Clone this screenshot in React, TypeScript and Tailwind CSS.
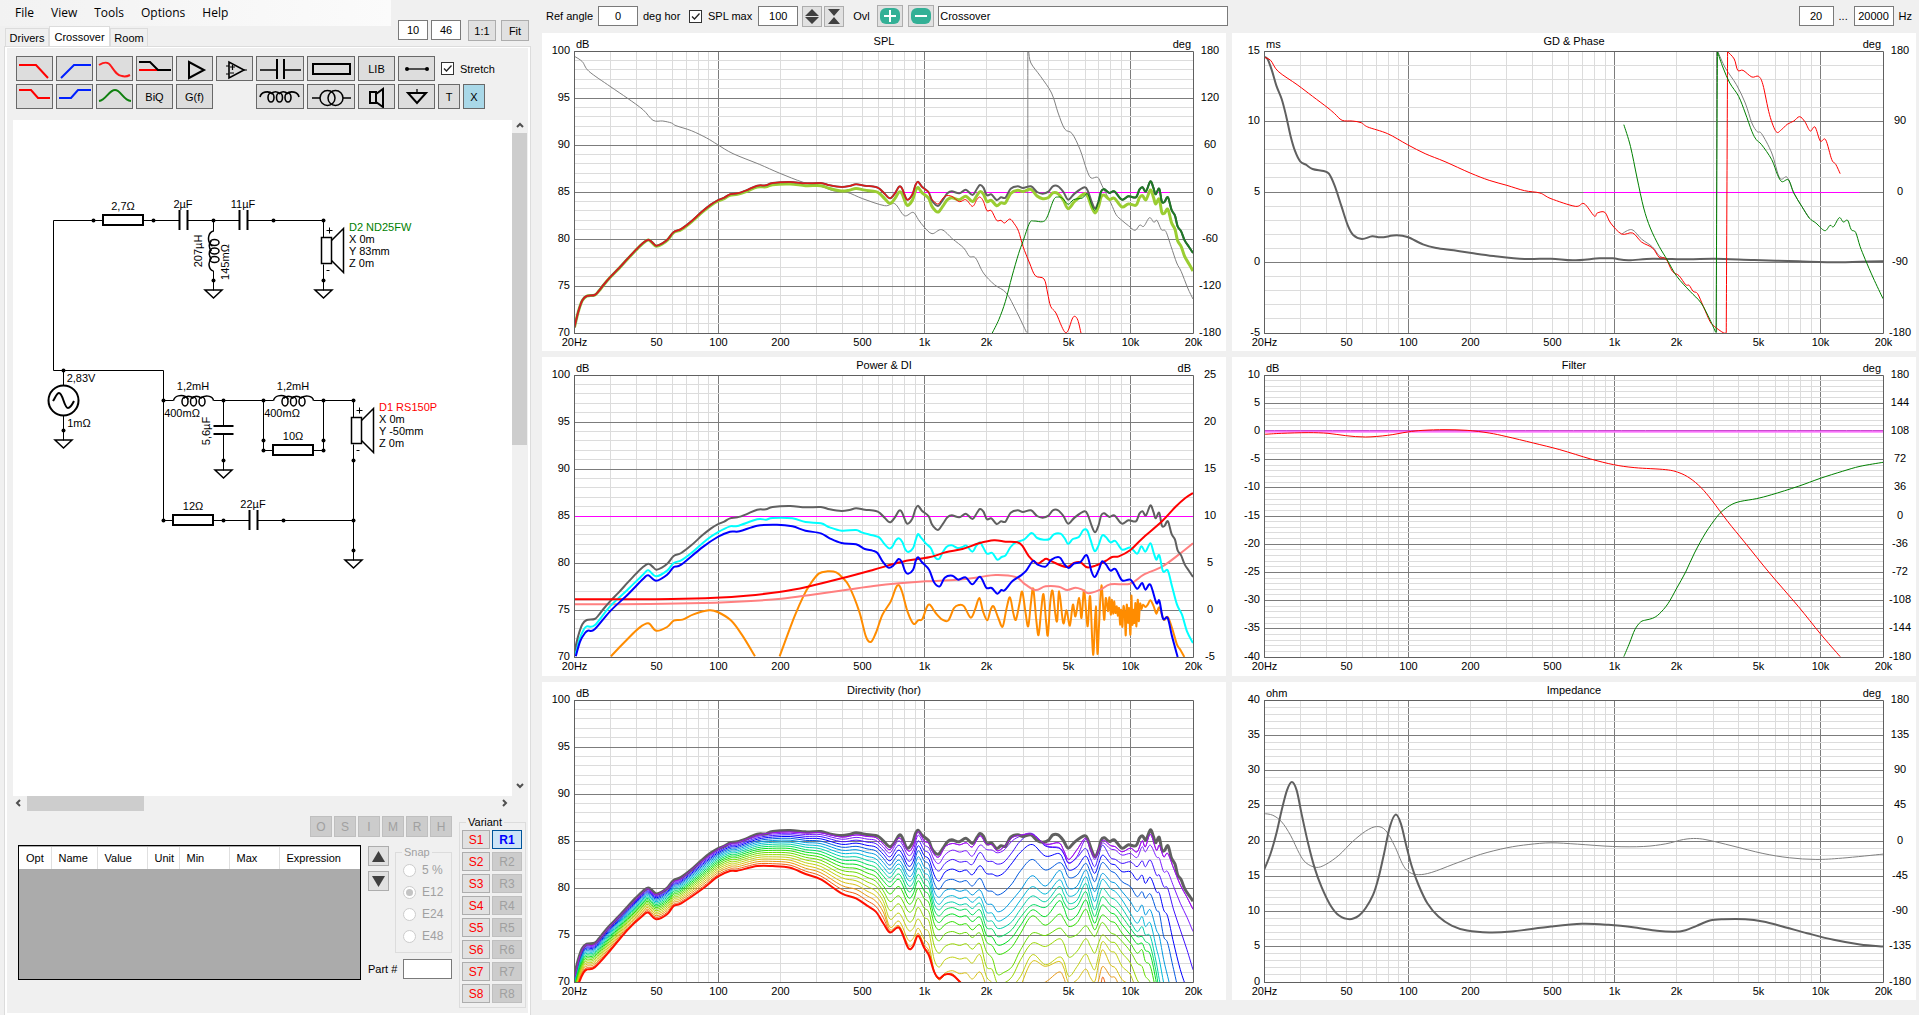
// src/App.tsx
import React, { useLayoutEffect, useRef, useState } from "react";

type Point = [number, number];

interface Trace {
  d: string;
  color: string;
  width?: number;
  dy?: number;
}

interface TargetLine {
  row: number;
  from: number;
  to: number;
}

interface ChartProps {
  title: string;
  leftUnit: string;
  rightUnit?: string;
  leftLabels: string[];
  rightLabels?: string[];
  rows: number;
  rowsPerMajor?: number;
  view: string;
  traces: Trace[];
  target?: TargetLine;
}

/* ---------- curve helpers ---------- */

const parse = (data: string): Point[] =>
  data
    .trim()
    .split(/\s+/)
    .map((p) => p.split(",").map(Number) as Point);

// the busy upper octaves are stored on a finer grid
const fine = (data: string, dy: number) =>
  parse(data)
    .map(([x, y]) => `${659 + x * 0.7575},${y + dy}`)
    .join(" ");

const smoothPoints = (pts: Point[]) => {
  let d = `M${pts[0][0]} ${pts[0][1]}`;
  for (let i = 0; i < pts.length - 1; i++) {
    const p0 = pts[i - 1] || pts[i];
    const p1 = pts[i];
    const p2 = pts[i + 1];
    const p3 = pts[i + 2] || p2;
    d += `C${p1[0] + (p2[0] - p0[0]) / 6} ${p1[1] + (p2[1] - p0[1]) / 6} ${
      p2[0] - (p3[0] - p1[0]) / 6
    } ${p2[1] - (p3[1] - p1[1]) / 6} ${p2[0]} ${p2[1]}`;
  }
  return d;
};

// "|" starts a new segment
const smooth = (data: string) =>
  data
    .split("|")
    .map((part) => smoothPoints(parse(part)))
    .join("");

const interpolate = (table: Point[], x: number) => {
  for (let i = 1; i < table.length; i++) {
    if (x <= table[i][0]) {
      const [x0, y0] = table[i - 1];
      const [x1, y1] = table[i];
      return y0 + ((x - x0) / (x1 - x0)) * (y1 - y0);
    }
  }
  return table[table.length - 1][1];
};

/* ---------- curve data ---------- */

const MAIN_LOW =
  "79,893 88,845 97,812 107,799 125,796 135,783 145,766 160,743 180,716 200,687 220,659 235,640 247,630 256,638 265,648 278,642 292,628 305,607 322,598 345,575 370,545 390,524 405,512 420,504 433,494 450,491 470,482 495,468 515,467 530,460 570,457 605,461 640,460 660,467 687,472 705,469 720,464 740,468 765,472 775,479 785,492 797,506 808,492 818,471 825,477 836,510 848,495 855,467 861,456 870,471 885,487";
const MAIN_MID =
  "892,510 900,524 908,528 918,510 928,491 938,485 955,491 970,480 985,496 995,478 1002,466 1010,474 1018,497 1028,494 1040,511 1050,503 1060,504 1072,477 1088,470 1100,475 1118,470 1132,487 1145,492 1158,486 1168,470 1180,470 1192,487 1203,510 1218,491 1240,473 1248,485 1256,515 1264,536";
const MAIN_HIGH =
  "1272,515 1278,485 1285,479 1297,490 1308,485 1325,510 1340,500 1357,503 1365,480 1372,473 1380,485 1390,455 1397,475 1402,494 1410,477 1416,515 1422,517 1430,503 1438,540 1446,558 1452,590 1460,605 1468,632 1478,652 1487,670";
const MAIN = `${MAIN_LOW} ${MAIN_MID} ${MAIN_HIGH}`;

const LISTENING_OFFSET = parse(
  "78,0 450,3 570,6 640,8 687,12 765,14 870,18 1000,20 1060,16 1088,12 1118,9 1145,15 1203,27 1264,14 1300,20 1390,26 1430,36 1487,54"
);
const LISTENING = parse(MAIN)
  .map(([x, y]) => `${x},${y + interpolate(LISTENING_OFFSET, x)}`)
  .join(" ");

const SPL_TRACES: Trace[] = [
  {
    color: "#808080",
    d: "79,80 97,96 112,125 160,170 200,206 235,240 258,272 280,274 300,280 310,288 345,303 380,325 405,345 440,372 500,404 545,430 600,458 640,470 670,484 700,488 735,507 785,528 808,522 830,558 850,548 862,570 875,592 893,612 915,600 940,628 965,655 978,680 992,685 1010,730 1035,765 1062,790 1085,845 1108,908 | 1111,910 1111,66 | 1113,66 1118,100 1140,140 1165,190 1180,250 1195,298 1212,312 1230,360 1245,420 1255,445 1270,443 1280,468 1300,520 1312,555 1325,572 1340,588 1355,602 1366,586 1375,590 1388,564 1398,578 1405,572 1415,600 1425,605 1437,650 1450,700 1460,725 1475,775 1487,808",
  },
  { color: "#9acd32", width: 3, d: LISTENING },
  { color: "#606060", width: 2, d: MAIN },
  { color: "#e01818", width: 1.5, d: MAIN_LOW },
  {
    color: "#ff0000",
    d: "885,487 892,508 900,518 908,522 922,500 938,500 955,516 970,510 985,530 995,510 1002,502 1010,515 1018,543 1028,543 1040,572 1050,572 1058,580 1070,568 1080,582 1090,605 1100,650 1115,700 1128,738 1148,748 1156,790 1163,830 1175,850 1188,890 1196,908 1203,902 1212,868 1218,860 1225,872 1232,910",
  },
  {
    color: "#008000",
    d: `1030,910 1045,870 1060,815 1075,740 1090,672 1100,635 1115,580 1125,574 1145,576 1155,562 1170,510 1180,502 1190,506 1203,524 1215,510 1235,505 1245,492 1250,500 1256,525 1264,542 ${MAIN_HIGH}`,
  },
  { color: "#207828", width: 2, d: MAIN_HIGH },
];

const GD_TRACES: Trace[] = [
  {
    color: "#606060",
    width: 2,
    d: "90,171 98,178 108,213 118,258 130,298 140,348 150,408 160,453 172,485 185,495 200,508 225,514 237,522 250,558 265,618 280,678 292,706 312,718 335,710 355,713 390,707 415,712 450,734 480,745 520,752 560,760 610,769 680,778 740,777 790,782 850,776 880,776 915,782 970,777 1050,779 1110,777 1200,781 1300,785 1390,788 1440,786 1492,785",
  },
  {
    color: "#808080",
    d: "900,703 923,690 945,718 970,742 985,768 1000,777 | 1115,999 1115,156 | 1118,156 1135,205 1160,255 1180,310 1195,370 1207,396 1217,402 1240,460 1258,535 1275,533 1290,580 1308,620 1325,655",
  },
  {
    color: "#ff0000",
    d: "90,173 105,182 122,215 165,255 200,290 235,325 250,342 267,362 290,364 310,369 325,382 370,402 415,435 455,462 500,486 557,520 600,542 640,557 680,573 715,580 740,597 795,620 815,612 838,649 845,640 862,638 875,670 900,703 925,700 945,727 970,745 985,773 1000,777 1015,815 1030,828 1045,855 1053,857 1062,875 1072,882 1085,920 1100,965 1110,980 1130,999 1137,999 | 1137,999 1140,156 | 1140,156 1155,178 1163,212 1175,212 1195,232 1210,230 1220,255 1235,345 1250,396 1262,390 1275,374 1290,364 1303,351 1315,366 1327,394 1338,382 1350,424 1362,420 1376,480 1385,494 1395,522",
  },
  {
    color: "#008000",
    d: "905,375 920,440 935,535 950,625 965,685 985,740 1003,780 1025,830 1055,875 1080,910 1100,960 1113,998 | 1114,998 1117,156 | 1117,156 1130,205 1145,250 1165,290 1180,340 1195,395 1205,420 1217,435 1240,480 1253,525 1263,546 1278,541 1290,580 1308,620 1325,655 1340,670 1360,693 1372,677 1380,681 1393,654 1402,667 1412,662 1420,690 1430,698 1440,740 1452,780 1470,835 1492,897",
  },
];

const POWER_TRACES: Trace[] = [
  {
    color: "#ff8c00",
    width: 2,
    d:
      "162,920 180,895 200,868 225,836 247,821 265,843 290,832 305,813 325,810 350,794 385,782 405,787 435,812 460,855 490,920 | 546,920 560,870 580,800 600,740 615,705 635,672 655,665 675,668 690,685 " +
      fine(
        "60,290 90,365 110,440 125,457 140,430 160,375 185,335 200,295 210,287 220,310 235,365 253,402 267,392 280,388 292,355 302,345 320,370 340,390 358,392 375,355 390,346 405,350 425,384 438,360 451,325 462,365 475,392 485,360 494,350 508,385 521,411 532,360 543,323 553,370 561,390 572,340 580,306 590,370 598,410 606,340 613,297 622,390 629,436 637,360 644,314 652,400 657,436 664,340 671,303 679,370 685,393 691,305 703,400 713,362 723,408 732,345 740,380 751,325 758,385 766,302 776,410 784,320 793,495 801,350 806,492 811,400 818,287 826,390 831,325 838,365 842,323 846,375 849,330 853,372 856,335 860,370 864,350 867,378 871,355 874,405 877,360 881,412 884,350 888,375 891,437 894,345 898,400 901,355 905,435 908,318 911,405 914,360 917,400 920,340 923,410 927,330 930,395 934,342 938,358 943,345 950,352 957,345 965,332 975,350 983,372 992,353 1005,390 1017,382 1030,415 1045,465 1055,480 1067,502",
        420
      ),
  },
  {
    color: "#ff8080",
    width: 2,
    d:
      "79,764 250,763 400,759 470,755 550,747 620,735 700,720 760,709 " +
      fine(
        "210,281 290,275 360,272 440,264 500,256 560,262 590,285 620,301 650,290 690,291 715,301 740,294 760,300 780,311 815,300 845,284 905,282 945,255 1000,231 1050,195 1093,161",
        420
      ),
  },
  {
    color: "#00ffff",
    width: 2,
    d:
      "79,915 90,870 100,840 107,830 125,827 160,770 200,720 235,675 247,662 265,680 290,663 305,640 322,632 345,610 380,570 405,548 433,530 450,529 495,509 515,510 530,505 575,506 605,517 640,521 660,533 687,543 720,541 " +
      fine(
        "97,128 130,137 150,143 165,162 180,176 190,170 200,152 210,146 220,158 228,178 237,187 252,175 260,150 267,133 275,143 290,161 305,175 318,203 330,208 340,190 352,172 368,167 385,175 400,172 412,168 430,186 442,168 453,158 462,172 474,192 490,190 505,210 518,202 530,197 545,172 560,158 585,150 608,130 625,145 645,150 662,148 675,134 695,132 708,147 718,163 732,148 750,142 763,122 775,122 785,150 797,184 808,170 820,138 832,143 845,158 860,154 880,180 905,174 925,192 938,170 950,186 965,161 975,190 983,210 992,197 1003,245 1017,242 1030,290 1045,345 1060,375 1075,425 1093,460",
        420
      ),
  },
  { color: "#606060", width: 2, d: MAIN, dy: 12 },
  {
    color: "#ff0000",
    width: 2,
    d:
      "79,749 200,749 300,748 400,744 470,738 545,727 610,711 687,686 760,660 " +
      fine(
        "190,224 240,212 300,203 350,188 400,178 450,161 495,152 530,156 565,158 580,168 600,200 625,221 640,214 652,207 670,216 712,232 735,220 755,218 775,233 800,228 830,214 850,202 870,200 905,181 940,147 1000,95 1040,52 1070,25 1093,10",
        420
      ),
  },
  {
    color: "#0000ff",
    width: 2,
    d:
      "82,920 92,875 103,850 110,843 125,839 160,785 200,735 235,688 247,677 265,693 290,675 305,652 322,645 370,593 405,562 433,546 455,545 495,528 540,525 575,530 605,543 640,551 660,566 687,580 720,584 740,598 " +
      fine(
        "130,183 145,190 160,215 178,234 192,228 208,208 218,217 228,245 237,252 252,240 260,213 267,203 278,217 300,240 315,278 332,290 347,264 370,258 388,270 410,263 430,284 453,261 472,294 488,295 505,312 517,301 527,302 550,275 575,258 592,243 612,214 625,224 650,231 668,210 692,203 705,222 720,235 735,222 755,217 770,197 778,205 788,245 798,262 810,240 820,215 832,225 845,243 860,238 880,272 905,270 925,297 940,280 950,300 965,285 983,340 992,333 1003,387 1017,385 1030,440 1047,502",
        420
      ),
  },
];

const FILTER_TRACES: Trace[] = [
  { color: "#ff80ff", width: 2, d: "90,246 1492,246" },
  { color: "#c030c8", d: "90,243 1492,243" },
  {
    color: "#ff0000",
    d: "90,254 130,251 190,249 235,251 275,258 320,262 370,257 415,247 450,242 500,240 550,242 600,250 640,261 700,280 760,300 830,328 882,345 930,354 1000,360 1030,369 1055,386 1080,414 1105,453 1140,515 1180,580 1235,670 1300,770 1350,852 1395,921",
  },
  {
    color: "#008000",
    d: "905,921 918,880 930,840 943,817 955,811 970,806 985,793 1005,762 1025,715 1045,667 1065,610 1090,550 1115,503 1130,482 1150,464 1170,455 1205,447 1240,435 1300,410 1350,386 1400,365 1440,350 1492,338",
  },
];

const IMPEDANCE_TRACES: Trace[] = [
  {
    color: "#808080",
    d: "90,415 110,420 130,440 150,480 170,535 185,563 208,577 230,568 260,540 290,500 320,468 345,454 365,465 385,510 405,570 420,592 440,599 470,592 520,567 580,538 640,518 690,508 740,503 800,507 880,514 950,514 1000,506 1040,493 1070,490 1100,496 1150,512 1220,535 1280,548 1340,553 1400,549 1492,537",
  },
  {
    color: "#606060",
    width: 2,
    d: "90,585 105,535 118,475 130,405 142,345 153,320 164,345 175,415 190,505 205,580 220,635 240,690 260,722 284,733 305,722 320,700 337,660 350,605 362,535 375,455 388,418 400,445 412,510 425,575 440,630 460,685 485,725 515,752 550,767 600,773 650,770 740,755 810,747 870,750 930,758 980,768 1020,771 1045,766 1070,753 1100,737 1130,733 1180,733 1220,740 1270,757 1320,775 1380,795 1440,809 1492,815",
  },
];

// one colour per 10 degrees off axis
const ANGLE_COLORS = [
  "#606060", "#a010f0", "#7a18ff", "#4010ff", "#0000ff", "#0058e0", "#0098e0",
  "#00b8d8", "#00d0a8", "#00dc60", "#00e020", "#30e000", "#68dc00", "#98d800",
  "#c0d010", "#d8c010", "#e89810", "#f06010", "#ff1000",
];

// below 700 Hz the fan is spread between its top and bottom curve
const FAN: [number, number, number][] = [
  [80, 905, 965], [90, 848, 922], [100, 815, 893], [108, 808, 884],
  [125, 806, 878], [160, 752, 828], [200, 697, 765], [235, 650, 722],
  [247, 640, 713], [265, 657, 733], [290, 638, 718], [305, 617, 693],
  [322, 608, 685], [370, 555, 642], [405, 521, 605], [433, 503, 588],
  [450, 500, 587], [495, 478, 573], [530, 470, 573], [570, 467, 578],
  [605, 470, 597], [640, 469, 613], [687, 481, 655], [720, 474, 670],
  [745, 478, 692], [765, 481, 710], [782, 500, 745],
];

// above it: x on the fine grid, then the level of every angle
const OFF_AXIS: number[][] = [
  [183, 80, 88, 98, 110, 122, 135, 147, 160, 172, 186, 200, 222, 245, 272, 298, 322, 330, 336, 338],
  [210, 47, 53, 62, 75, 90, 104, 120, 132, 145, 162, 178, 200, 228, 252, 280, 304, 318, 322, 324],
  [237, 88, 92, 105, 122, 137, 150, 167, 180, 196, 213, 232, 250, 274, 303, 330, 360, 375, 382, 384],
  [252, 72, 78, 92, 108, 124, 140, 158, 172, 188, 204, 222, 242, 268, 298, 326, 356, 372, 378, 380],
  [267, 28, 34, 45, 62, 77, 92, 110, 128, 144, 163, 182, 205, 235, 262, 297, 325, 340, 345, 348],
  [285, 56, 62, 74, 90, 106, 122, 140, 158, 174, 192, 212, 235, 264, 292, 326, 358, 374, 380, 384],
  [300, 65, 70, 84, 100, 118, 134, 152, 170, 188, 207, 227, 250, 278, 305, 340, 378, 395, 403, 408],
  [315, 97, 102, 118, 138, 164, 188, 212, 232, 250, 268, 288, 310, 342, 376, 418, 452, 454, 456, 456],
  [330, 103, 110, 130, 153, 183, 208, 232, 253, 270, 288, 308, 330, 363, 400, 442, 478, 480, 480, 476],
  [348, 72, 80, 104, 130, 156, 184, 212, 234, 252, 270, 290, 314, 342, 380, 420, 460, 466, 466, 464],
  [370, 63, 70, 90, 118, 147, 178, 207, 227, 246, 263, 282, 305, 335, 372, 412, 453, 462, 466, 466],
  [392, 66, 74, 96, 126, 155, 186, 214, 236, 255, 271, 291, 315, 342, 377, 418, 462, 484, 488, 486],
  [412, 58, 68, 92, 124, 150, 182, 210, 232, 252, 268, 288, 312, 338, 372, 415, 460, 500, 510, 512],
  [430, 72, 80, 108, 133, 164, 198, 225, 247, 266, 285, 305, 330, 353, 388, 430, 478, 520],
  [453, 42, 47, 75, 97, 137, 175, 210, 232, 250, 270, 292, 315, 340, 372, 405, 457, 510],
  [472, 70, 72, 88, 122, 160, 210, 250, 276, 300, 322, 345, 365, 395, 440, 470, 500],
  [490, 72, 74, 90, 124, 162, 214, 254, 280, 304, 328, 352, 378, 416, 450, 490],
  [505, 88, 92, 98, 132, 168, 225, 275, 303, 325, 350, 375, 402, 463, 490, 520],
  [525, 78, 80, 90, 126, 158, 216, 268, 297, 322, 346, 372, 400, 458, 490, 520],
  [550, 50, 52, 62, 96, 128, 190, 240, 275, 304, 328, 352, 380, 440, 470, 500],
  [575, 43, 45, 48, 62, 96, 152, 210, 240, 268, 292, 316, 340, 390, 420, 470, 500],
  [610, 45, 43, 40, 42, 73, 118, 167, 200, 228, 255, 270, 288, 340, 370, 405, 425, 500],
  [650, 72, 72, 76, 78, 108, 150, 198, 222, 245, 262, 290, 316, 347, 380, 435, 440, 487, 520],
  [690, 43, 68, 82, 84, 100, 128, 152, 180, 200, 222, 243, 283, 325, 357, 412, 425, 457, 500],
  [705, 60, 92, 100, 102, 122, 140, 174, 200, 222, 246, 264, 298, 336, 372, 425, 445, 475],
  [720, 88, 118, 130, 128, 150, 172, 205, 228, 250, 268, 300, 320, 352, 412, 470, 490, 520],
  [745, 62, 88, 108, 112, 140, 165, 198, 218, 240, 258, 285, 308, 344, 394, 440, 480, 520],
  [770, 50, 54, 58, 85, 108, 130, 150, 170, 190, 215, 240, 268, 318, 357, 403, 448, 500],
  [785, 84, 86, 92, 116, 136, 158, 185, 210, 235, 258, 280, 302, 336, 380, 430, 474, 520],
  [798, 110, 112, 118, 140, 160, 185, 215, 245, 270, 290, 310, 330, 350, 400, 450, 485, 520],
  [810, 82, 86, 92, 106, 130, 152, 184, 206, 232, 256, 278, 304, 326, 368, 404, 430, 480],
  [822, 53, 60, 68, 75, 105, 127, 160, 178, 205, 230, 255, 285, 308, 345, 365, 390, 440, 472],
  [845, 66, 76, 86, 112, 130, 152, 184, 206, 232, 256, 278, 304, 338, 366, 394, 435, 470],
  [860, 65, 80, 90, 118, 135, 160, 190, 215, 240, 265, 285, 310, 345, 370, 400, 445, 475],
  [880, 85, 95, 105, 130, 155, 185, 215, 240, 265, 290, 315, 340, 365, 400, 440, 480, 520],
  [905, 75, 84, 100, 125, 155, 200, 245, 280, 305, 325, 345, 370, 395, 430, 465, 500],
  [925, 80, 95, 112, 140, 180, 230, 275, 310, 335, 350, 372, 400, 430, 480, 520],
  [940, 47, 62, 80, 122, 165, 215, 255, 290, 320, 350, 370, 390, 440, 500],
  [950, 58, 80, 95, 140, 190, 235, 285, 320, 345, 365, 392, 425, 470, 520],
  [965, 30, 42, 75, 120, 172, 222, 270, 310, 350, 380, 405, 440, 490],
  [983, 70, 90, 110, 165, 215, 270, 330, 385, 430, 460, 490, 520],
  [992, 52, 75, 115, 165, 220, 280, 350, 420, 480, 520],
  [1005, 92, 110, 155, 200, 270, 350, 420, 490, 540],
  [1017, 80, 100, 155, 205, 290, 370, 470, 540],
  [1035, 120, 145, 200, 270, 370, 450, 540],
  [1055, 180, 195, 250, 330, 450, 530],
  [1075, 215, 232, 292, 390, 510],
  [1093, 240, 268, 335, 450, 560],
];

const angleCurve = (k: number) =>
  [
    ...FAN.map(
      ([x, top, bottom]) =>
        `${x},${top + (bottom - top) * Math.pow(k / 18, 1.25)}`
    ),
    ...OFF_AXIS.map(
      (col) => `${659 + col[0] * 0.7575},${(col[k + 1] ?? 560) + 435}`
    ),
  ].join(" ");

const DIRECTIVITY_TRACES: Trace[] = [
  ...ANGLE_COLORS.slice(1, 18).map((color, i) => ({
    color,
    d: angleCurve(i + 1),
  })),
  { color: "#ff1000", width: 2, d: angleCurve(18) },
  { color: "#606060", width: 3, d: MAIN, dy: 9 },
  { color: "#a010f0", d: angleCurve(1) },
];

/* ---------- chart ---------- */

const FREQ_LABELS: [number, string][] = [
  [20, "20Hz"],
  [50, "50"],
  [100, "100"],
  [200, "200"],
  [500, "500"],
  [1000, "1k"],
  [2000, "2k"],
  [5000, "5k"],
  [10000, "10k"],
  [20000, "20k"],
];

const GRID_FREQS = [10, 100, 1000, 10000]
  .flatMap((decade) => [1, 2, 3, 4, 5, 6, 7, 8, 9].map((n) => n * decade))
  .filter((f) => f > 20 && f < 20000);

const MARGIN = { left: 32, right: 33, top: 18, bottom: 18 };

const Chart: React.FC<ChartProps> = ({
  title,
  leftUnit,
  rightUnit,
  leftLabels,
  rightLabels = [],
  rows,
  rowsPerMajor = 5,
  view,
  traces,
  target,
}) => {
  const ref = useRef<HTMLDivElement>(null);
  const [size, setSize] = useState({ w: 684, h: 318 });

  useLayoutEffect(() => {
    const el = ref.current;
    if (!el) return;
    const measure = () => setSize({ w: el.clientWidth, h: el.clientHeight });
    measure();
    const observer = new ResizeObserver(measure);
    observer.observe(el);
    return () => observer.disconnect();
  }, []);

  const x0 = MARGIN.left;
  const y0 = MARGIN.top;
  const w = Math.max(10, size.w - MARGIN.left - MARGIN.right);
  const h = Math.max(10, size.h - MARGIN.top - MARGIN.bottom);
  const xOf = (f: number) => Math.floor(x0 + (Math.log10(f / 20) / 3) * w) + 0.5;
  const yOf = (row: number) => Math.floor(y0 + (row / rows) * h) + 0.5;
  const [vx, vy, vw, vh] = view.split(" ").map(Number);

  return (
    <div ref={ref} className="min-h-0 min-w-0 overflow-hidden bg-white">
      <svg width={size.w} height={size.h} className="block text-[11px]">
        {GRID_FREQS.map((f) => (
          <path
            key={f}
            d={`M${xOf(f)} ${y0}V${y0 + h}`}
            stroke={[100, 1000, 10000].includes(f) ? "#7c7c7c" : "#dcdcdc"}
          />
        ))}
        {Array.from({ length: rows + 1 }, (_, i) => i)
          .sort((a, b) => Number(a % rowsPerMajor === 0) - Number(b % rowsPerMajor === 0))
          .map((i) => (
            <path
              key={i}
              d={`M${x0} ${yOf(i)}H${x0 + w}`}
              stroke={i % rowsPerMajor === 0 ? "#7c7c7c" : "#dcdcdc"}
            />
          ))}
        {target && (
          <path
            d={`M${xOf(target.from)} ${yOf(target.row)}H${xOf(target.to)}`}
            stroke="#ff00ff"
          />
        )}
        <svg
          x={x0}
          y={y0}
          width={w}
          height={h}
          viewBox={`${vx} ${vy} ${vw} ${vh}`}
          preserveAspectRatio="none"
          fill="none"
          strokeLinejoin="round"
        >
          {traces.map((t, i) => (
            <path
              key={i}
              d={smooth(t.d)}
              stroke={t.color}
              strokeWidth={t.width || 1}
              vectorEffect="non-scaling-stroke"
              transform={t.dy ? `translate(0 ${t.dy})` : undefined}
            />
          ))}
        </svg>
        <path
          d={`M${xOf(20)} ${yOf(0)}H${xOf(20000)}V${yOf(rows)}H${xOf(20)}Z`}
          fill="none"
          stroke="#606060"
        />
        <text x={size.w / 2} y={12} textAnchor="middle">
          {title}
        </text>
        <text x={x0 + 2} y={y0 - 3}>
          {leftUnit}
        </text>
        {rightUnit && (
          <text x={x0 + w - 2} y={y0 - 3} textAnchor="end">
            {rightUnit}
          </text>
        )}
        {leftLabels.map((label, i) => (
          <text
            key={label}
            x={x0 - 4}
            y={yOf((i * rows) / (leftLabels.length - 1)) + 2}
            textAnchor="end"
          >
            {label}
          </text>
        ))}
        {rightLabels.map((label, i) => (
          <text
            key={label}
            x={x0 + w + 17}
            y={yOf((i * rows) / (rightLabels.length - 1)) + 2}
            textAnchor="middle"
          >
            {label}
          </text>
        ))}
        {FREQ_LABELS.map(([f, label]) => (
          <text key={f} x={xOf(f)} y={y0 + h + 13} textAnchor="middle">
            {label}
          </text>
        ))}
      </svg>
    </div>
  );
};

/* ---------- schematic ---------- */

const Node: React.FC<{ x: number; y: number }> = ({ x, y }) => (
  <circle cx={x} cy={y} r={2} fill="#000" stroke="none" />
);

const Ground: React.FC<{ x: number; y: number }> = ({ x, y }) => (
  <g>
    <Node x={x} y={y} />
    <path d={`M${x} ${y}v10`} />
    <path d={`M${x - 8.5} ${y + 9.5}h17l-8.5 8z`} strokeWidth={1.5} />
  </g>
);

const Resistor: React.FC<{ x: number; y: number }> = ({ x, y }) => (
  <rect x={x} y={y - 5} width={40} height={10} strokeWidth={2} fill="#fff" />
);

const Coil: React.FC<{ x: number; y: number; vertical?: boolean }> = ({
  x,
  y,
  vertical,
}) => (
  <g
    transform={`translate(${x} ${y})${vertical ? " rotate(90)" : ""}`}
    strokeWidth={1.5}
  >
    <path d="M0 0c1-5 8-6 12-4c1 0 2 1 3 3M10 -2c2-3 7-3 10 0M18 -2c2-3 7-3 10 0M27 -2c4-4 12-3 13 2" />
    <ellipse cx={11.5} cy={1} rx={3} ry={4.5} />
    <ellipse cx={20} cy={1} rx={3} ry={4.5} />
    <ellipse cx={28.5} cy={1} rx={3} ry={4.5} />
  </g>
);

const Speaker: React.FC<{ x: number; y: number }> = ({ x, y }) => (
  <g>
    <path d={`M${x} ${y}v17M${x} ${y + 44}v16`} />
    <rect x={x - 2} y={y + 17} width={10} height={26} strokeWidth={1.5} />
    <path d={`M${x + 8} ${y + 20}L${x + 20} ${y + 8}v44L${x + 8} ${y + 40}`} strokeWidth={1.5} />
    <path d={`M${x + 3} ${y + 10}h6M${x + 6} ${y + 7}v6M${x + 3} ${y + 50}h3`} />
    <Node x={x} y={y} />
  </g>
);

const DriverInfo: React.FC<{
  x: number;
  y: number;
  color: string;
  lines: string[];
}> = ({ x, y, color, lines }) => (
  <g stroke="none">
    {lines.map((line, i) => (
      <text key={line} x={x} y={y + i * 12} fill={i === 0 ? color : "#000"}>
        {line}
      </text>
    ))}
  </g>
);

const NODES: Point[] = [
  [93.5, 220.5], [153.5, 220.5], [213.5, 220.5], [273.5, 220.5],
  [63.5, 370.5], [163.5, 400.5], [223.5, 400.5], [263.5, 400.5],
  [323.5, 400.5], [263.5, 440.5], [263.5, 450.5], [323.5, 440.5],
  [323.5, 450.5], [163.5, 520.5], [223.5, 520.5], [283.5, 520.5],
  [353.5, 520.5], [353.5, 460.5],
];

const Schematic: React.FC = () => (
  <svg
    width={500}
    height={676}
    viewBox="13 120 500 676"
    className="block text-[11px]"
    fill="none"
    stroke="#000"
  >
    <path d="M93.5 220.5H53.5V370.5H163.5V520.5H173M93.5 220.5H103M143 220.5H179M188 220.5H239M248 220.5H323.5" />
    <path d="M213.5 220.5v11M213.5 271v10M63.5 370.5v15M63.5 416v15" />
    <path d="M163.5 400.5h10M213.5 400.5h60M313.5 400.5h40M223.5 400.5v25M223.5 435v26" />
    <path d="M263.5 400.5v50h10M313.5 450.5h10v-50" />
    <path d="M213 520.5h36M258 520.5h95.5M353.5 460.5v90" />
    <path
      d="M179.5 210v20M187.5 210v20M239.5 210v20M247.5 210v20M249.5 510v20M257.5 510v20M213.5 426h20M213.5 434h20"
      strokeWidth={2}
    />
    <Resistor x={103} y={220} />
    <Resistor x={273} y={450} />
    <Resistor x={173} y={520} />
    <Coil x={173.5} y={400.5} />
    <Coil x={273.5} y={400.5} />
    <g transform="matrix(-1 0 0 1 427 0)">
      <Coil x={213.5} y={231} vertical />
    </g>
    <Ground x={213.5} y={280.5} />
    <Ground x={323.5} y={280.5} />
    <Ground x={63.5} y={430.5} />
    <Ground x={223.5} y={460.5} />
    <Ground x={353.5} y={550.5} />
    <Speaker x={323.5} y={220.5} />
    <Speaker x={353.5} y={400.5} />
    <circle cx={63.5} cy={400.5} r={15} strokeWidth={2} />
    <path d="M53 401c3-5 4-8 6-8c4 0 5 15 9 15c2 0 4-3 6-7" strokeWidth={2} />
    {NODES.map(([x, y]) => (
      <Node key={`${x}-${y}`} x={x} y={y} />
    ))}
    <g fill="#000" stroke="none" textAnchor="middle">
      <text x={123} y={210}>2,7Ω</text>
      <text x={183} y={208}>2µF</text>
      <text x={243} y={208}>11µF</text>
      <text x={193} y={390}>1,2mH</text>
      <text x={293} y={390}>1,2mH</text>
      <text x={182} y={417}>400mΩ</text>
      <text x={282} y={417}>400mΩ</text>
      <text x={293} y={440}>10Ω</text>
      <text x={193} y={510}>12Ω</text>
      <text x={253} y={508}>22µF</text>
      <text x={81} y={382}>2,83V</text>
      <text x={79} y={427}>1mΩ</text>
      <text transform="translate(202 251) rotate(-90)">207µH</text>
      <text transform="translate(229 262) rotate(-90)">145mΩ</text>
      <text transform="translate(210 431) rotate(-90)">5,6µF</text>
    </g>
    <DriverInfo x={349} y={231} color="#008000" lines={["D2 ND25FW", "X 0m", "Y 83mm", "Z 0m"]} />
    <DriverInfo x={379} y={411} color="#ff0000" lines={["D1 RS150P", "X 0m", "Y -50mm", "Z 0m"]} />
  </svg>
);

/* ---------- small controls ---------- */

const Tool: React.FC<{
  label: string;
  wide?: boolean;
  children: React.ReactNode;
}> = ({ label, wide, children }) => (
  <button
    aria-label={label}
    className={`flex h-[25px] items-center justify-center border border-[#696969] bg-[#dddddd] ${
      wide ? "w-12" : "w-[37px]"
    }`}
  >
    {children}
  </button>
);

const ToolIcon: React.FC<{
  w?: number;
  color?: string;
  children: React.ReactNode;
}> = ({ w = 35, color = "#000", children }) => (
  <svg
    width={w}
    height={23}
    viewBox={`0 0 ${w} 23`}
    fill="none"
    stroke={color}
    strokeWidth={2}
  >
    {children}
  </svg>
);

const Check: React.FC<{ label: string }> = ({ label }) => (
  <label className="flex items-center gap-[6px]">
    <span className="relative size-[13px]">
      <input
        type="checkbox"
        defaultChecked
        className="block size-[13px] appearance-none border border-[#333333] bg-white"
      />
      <svg
        viewBox="0 0 13 13"
        className="pointer-events-none absolute inset-0 size-[13px]"
        fill="none"
        stroke="#222"
      >
        <path d="M3 6.5l2.5 2.5L10.5 3.5" strokeWidth={1.3} />
      </svg>
    </span>
    {label}
  </label>
);

const Field: React.FC<{ label: string; value: string; className: string }> = ({
  label,
  value,
  className,
}) => (
  <input
    type="text"
    aria-label={label}
    defaultValue={value}
    className={`h-5 border border-[#7a7a7a] bg-white outline-none ${className}`}
  />
);

const Chevron: React.FC<{ d: string }> = ({ d }) => (
  <svg width={9} height={9} viewBox="0 0 9 9" fill="none" stroke="#505050" strokeWidth={2}>
    <path d={d} />
  </svg>
);

const COLUMNS = [
  { name: "Opt", width: "w-8" },
  { name: "Name", width: "w-[46px]" },
  { name: "Value", width: "w-[50px]" },
  { name: "Unit", width: "w-8" },
  { name: "Min", width: "w-[50px]" },
  { name: "Max", width: "w-[50px]" },
  { name: "Expression", width: "w-[81px]" },
];

/* ---------- left side ---------- */

const Toolbar: React.FC = () => (
  <div className="flex flex-col gap-[3px] pl-[9px]">
    <div className="flex gap-[3px]">
      <Tool label="Low pass">
        <ToolIcon color="#ff0000"><path d="M2 8h17l12 13" /></ToolIcon>
      </Tool>
      <Tool label="High pass">
        <ToolIcon color="#0020ff"><path d="M4 21L17 8h17" /></ToolIcon>
      </Tool>
      <Tool label="All pass">
        <ToolIcon color="#ff1818"><path d="M2 8c5-3 9-4 12 1c4 6 7 10 11 10c3 1 6 0 8-1" /></ToolIcon>
      </Tool>
      <Tool label="Level">
        <ToolIcon>
          <path d="M2 13h20" stroke="#ff0000" />
          <path d="M2 5h11l8 8h13" />
        </ToolIcon>
      </Tool>
      <Tool label="Buffer">
        <ToolIcon><path d="M12 5v16l15-8z" /></ToolIcon>
      </Tool>
      <Tool label="Op amp">
        <ToolIcon>
          <path d="M12 5v16l15-8z" strokeWidth={1.6} />
          <path d="M9 9h3M9 17h3M27 13h3M13 10h5M15.500 8v5M13 16h4" strokeWidth={1.2} />
        </ToolIcon>
      </Tool>
      <Tool label="Capacitor" wide>
        <ToolIcon w={46}>
          <path d="M3 13h17M27 13h17" strokeWidth={1.3} />
          <path d="M20 2v20M27 2v20" />
        </ToolIcon>
      </Tool>
      <Tool label="Resistor" wide>
        <ToolIcon w={46}><rect x={5} y={7} width={37} height={10} /></ToolIcon>
      </Tool>
      <Tool label="Library">LIB</Tool>
      <Tool label="Wire">
        <ToolIcon>
          <path d="M8 12h20" strokeWidth={1.3} />
          <circle cx={8} cy={12} r={2} fill="#000" stroke="none" />
          <circle cx={28} cy={12} r={2} fill="#000" stroke="none" />
        </ToolIcon>
      </Tool>
      <div className="ml-[3px] flex items-center">
        <Check label="Stretch" />
      </div>
    </div>
    <div className="flex gap-[3px]">
      <Tool label="Low shelf">
        <ToolIcon color="#ff0000"><path d="M2 5h12l7 8h12" /></ToolIcon>
      </Tool>
      <Tool label="High shelf">
        <ToolIcon color="#0020ff"><path d="M2 13h12l7-8h13" /></ToolIcon>
      </Tool>
      <Tool label="Peak">
        <ToolIcon color="#108010"><path d="M2 16c7-1 10-11 16-11c6 0 8 10 16 11" /></ToolIcon>
      </Tool>
      <Tool label="Biquad">BiQ</Tool>
      <Tool label="Transfer function">G(f)</Tool>
      <div className="w-[37px]" />
      <Tool label="Inductor" wide>
        <ToolIcon w={46}>
          <g strokeWidth={1.6}>
            <path d="M3 12c1-5 8-7 13-3M14 9c2-3 7-3 9 0M22 9c2-3 6-3 9 0M29 9c5-4 12-2 13 3" />
            <ellipse cx={14} cy={12.5} rx={3} ry={4.5} />
            <ellipse cx={22.5} cy={12.5} rx={3} ry={4.5} />
            <ellipse cx={31} cy={12.5} rx={3} ry={4.5} />
          </g>
        </ToolIcon>
      </Tool>
      <Tool label="Transformer" wide>
        <ToolIcon w={46}>
          <g strokeWidth={1.5}>
            <path d="M4 13h8M35 13h8" />
            <circle cx={19.5} cy={13} r={7.5} />
            <circle cx={27.5} cy={13} r={7.5} />
          </g>
        </ToolIcon>
      </Tool>
      <Tool label="Driver">
        <ToolIcon>
          <rect x={11} y={7} width={6} height={11} />
          <path d="M17 9l7-5v18l-7-5" />
        </ToolIcon>
      </Tool>
      <Tool label="Ground">
        <ToolIcon>
          <path d="M18 4v4" strokeWidth={1.3} />
          <path d="M9 8h18l-9 10z" />
        </ToolIcon>
      </Tool>
      <button className="h-[25px] w-[22px] border border-[#696969] bg-[#dddddd]">T</button>
      <button className="h-[25px] w-[22px] border border-[#696969] bg-[#a9d8e8]">X</button>
    </div>
  </div>
);

const Canvas: React.FC = () => (
  <div className="mt-[11px] grid min-h-0 flex-1 grid-cols-[1fr_16px] grid-rows-[1fr_15px] pl-[6px]">
    <div className="min-h-0 overflow-hidden bg-white">
      <Schematic />
    </div>
    <div className="flex flex-col items-center gap-[3px] pt-px pb-[6px]">
      <Chevron d="M1 6l3-3l3 3" />
      <div className="flex w-full flex-1 flex-col pr-px">
        <div className="h-[312px] bg-[#cdcdcd]" />
      </div>
      <Chevron d="M1 3l3 3l3-3" />
    </div>
    <div className="flex items-center gap-[3px] px-[2px]">
      <Chevron d="M5 1l-3 3l3 3" />
      <div className="h-full flex-1">
        <div className="h-full w-[117px] bg-[#cdcdcd]" />
      </div>
      <Chevron d="M2 1l3 3l-3 3" />
    </div>
  </div>
);

const VariantBox: React.FC = () => {
  const [active, setActive] = useState(1);

  return (
    <fieldset className="h-48 w-[67px] border border-[#dcdcdc] pl-[2px]">
      <legend className="ml-1 h-3 px-[2px] leading-3">Variant</legend>
      <div className="grid grid-cols-[28px_30px] gap-x-[2px] gap-y-[3px] pt-[2px]">
        {[1, 2, 3, 4, 5, 6, 7, 8].map((n) => (
          <React.Fragment key={n}>
            <button
              onClick={() => setActive(n)}
              className="h-[19px] border border-[#adadad] bg-[#e1e1e1] text-[12px] leading-4 text-[#ff0000]"
            >
              S{n}
            </button>
            <button
              disabled={n !== active}
              className={`h-[19px] border text-[12px] leading-4 ${
                n === active
                  ? "border-[#00549a] bg-[#cce4f7] font-bold text-[#0000ff]"
                  : "border-[#bfbfbf] bg-[#cccccc] text-[#a0a0a0]"
              }`}
            >
              R{n}
            </button>
          </React.Fragment>
        ))}
      </div>
    </fieldset>
  );
};

const PartsPanel: React.FC = () => (
  <div className="mt-[5px] flex h-[197px] gap-[7px] pl-[11px]">
    <div className="w-[434px]">
      <div className="flex justify-end gap-[2px]">
        {["O", "S", "I", "M", "R", "H"].map((letter) => (
          <button
            key={letter}
            disabled
            className="h-[21px] w-[22px] border border-[#bfbfbf] bg-[#cccccc] text-[12px] text-[#a0a0a0]"
          >
            {letter}
          </button>
        ))}
      </div>
      <div className="mt-2 flex gap-[7px]">
        <div className="h-[135px] w-[343px] border border-black bg-[#ababab] pt-px">
          <table className="w-full table-fixed border-collapse">
            <thead>
              <tr className="h-[22px] bg-white">
                {COLUMNS.map((col) => (
                  <th
                    key={col.name}
                    className={`${col.width} overflow-hidden border-r border-[#e0e0e0] pl-[7px] text-left font-normal whitespace-nowrap last:border-r-0`}
                  >
                    {col.name}
                  </th>
                ))}
              </tr>
            </thead>
          </table>
        </div>
        <div className="flex flex-col">
          <div className="flex items-start gap-[6px]">
            <div className="mt-px flex flex-col gap-[5px]">
              <button aria-label="Move up" className="flex h-5 w-[21px] items-center justify-center border border-[#adadad] bg-[#e1e1e1]">
                <svg width={13} height={11}><path d="M6.5 0l6.5 11H0z" fill="#404040" /></svg>
              </button>
              <button aria-label="Move down" className="flex h-5 w-[21px] items-center justify-center border border-[#adadad] bg-[#e1e1e1]">
                <svg width={13} height={11}><path d="M0 0h13L6.5 11z" fill="#404040" /></svg>
              </button>
            </div>
            <fieldset disabled className="mt-px h-[107px] w-[57px] border border-[#dcdcdc] text-[#a0a0a0]">
              <legend className="ml-[6px] h-3 px-[2px] leading-3">Snap</legend>
              <div className="flex flex-col gap-[9px] pt-[6px] pl-[7px]">
                {["5 %", "E12", "E24", "E48"].map((s) => (
                  <label key={s} className="flex h-[13px] items-center gap-[6px] text-[12px] leading-[13px]">
                    <input
                      type="radio"
                      name="snap"
                      defaultChecked={s === "E12"}
                      className="grid size-[13px] appearance-none place-content-center rounded-full border border-[#cccccc] bg-white before:size-[7px] before:rounded-full before:content-[''] checked:before:bg-[#c4c4c4]"
                    />
                    {s}
                  </label>
                ))}
              </div>
            </fieldset>
          </div>
          <label className="mt-[6px] flex items-center justify-between whitespace-nowrap">
            Part #
            <input type="text" className="h-5 w-[49px] border border-[#7a7a7a] bg-white" />
          </label>
        </div>
      </div>
    </div>
    <VariantBox />
  </div>
);

const LeftSide: React.FC = () => (
  <aside className="flex w-[542px] shrink-0 flex-col">
    <div className="flex h-[46px] justify-between">
      <div className="flex flex-col justify-between">
        <nav className="flex h-[26px] w-[391px] items-center gap-[17px] bg-linear-to-r from-[#f2f2f2] to-[#fbfbfb] pl-[15px] font-['Open_Sans','Noto_Sans',sans-serif] text-[12px]">
          {["File", "View", "Tools", "Options", "Help"].map((item) => (
            <button key={item}>{item}</button>
          ))}
        </nav>
        <div role="tablist" className="flex h-5 items-end pl-[5px]">
          <button role="tab" className="h-[18px] w-11 border border-b-0 border-[#dcdcdc]">Drivers</button>
          <button role="tab" aria-selected className="h-5 w-[61px] border border-b-0 border-[#dcdcdc] bg-white">Crossover</button>
          <button role="tab" className="h-[18px] w-[38px] border border-b-0 border-[#dcdcdc]">Room</button>
        </div>
      </div>
      <div className="mt-5 mr-[13px] flex items-start gap-[3px]">
        <Field label="Grid" value="10" className="w-[30px] text-center" />
        <Field label="Zoom" value="46" className="w-[30px] text-center" />
        <button className="ml-1 h-[21px] w-7 border border-[#adadad] bg-[#e1e1e1]">1:1</button>
        <button className="ml-[2px] h-[21px] w-7 border border-[#adadad] bg-[#e1e1e1]">Fit</button>
      </div>
    </div>
    <div className="ml-1 flex min-h-0 w-[527px] flex-1 flex-col border border-b-0 border-[#dcdcdc] bg-white px-[2px] pt-px pb-[2px]">
      <div className="flex min-h-0 flex-1 flex-col bg-[#f0f0f0] pt-2">
        <Toolbar />
        <Canvas />
        <PartsPanel />
      </div>
    </div>
  </aside>
);

/* ---------- right side ---------- */

const ChartBar: React.FC = () => (
  <div className="flex h-[33px] shrink-0 items-center pb-px pl-1">
    <label htmlFor="angle" className="w-[52px]">Ref angle</label>
    <input id="angle" defaultValue="0" className="h-5 w-10 border border-[#7a7a7a] bg-white text-center" />
    <span className="ml-[5px] w-[46px]">deg hor</span>
    <Check label="SPL max" />
    <Field label="SPL maximum" value="100" className="ml-[6px] w-10 text-center" />
    <button aria-label="Shift range" className="ml-1 flex h-[21px] w-5 items-center justify-center border border-[#adadad] bg-[#e1e1e1]">
      <svg width={14} height={17}><path d="M7 1l7 7H0zM7 16l7-7H0z" fill="#404040" /></svg>
    </button>
    <button aria-label="Compress range" className="ml-[2px] flex h-[21px] w-5 items-center justify-center border border-[#adadad] bg-[#e1e1e1]">
      <svg width={14} height={17}><path d="M1 1h12L7 8zM1 16h12L7 9z" fill="#404040" /></svg>
    </button>
    <span className="ml-[9px] w-6">Ovl</span>
    {["M9 3v12M3 9h12", "M3 9h12"].map((d, i) => (
      <button
        key={d}
        aria-label={i === 0 ? "Add overlay" : "Remove overlay"}
        className="mr-[5px] flex h-[22px] w-[26px] items-center justify-center border border-[#adadad] bg-[#e1e1e1]"
      >
        <svg width={20} height={18} viewBox="-1 0 20 18">
          <rect x={-1} y={1} width={20} height={16} rx={6} fill="#33b096" />
          <path d={d} stroke="#fff" strokeWidth={2} />
        </svg>
      </button>
    ))}
    <Field label="Overlay name" value="Crossover" className="-ml-px w-[290px] px-px" />
    <div className="ml-auto flex items-center gap-[5px] pr-[7px]">
      <Field label="Minimum frequency" value="20" className="w-[35px] text-center" />
      <span className="w-[10px]">...</span>
      <Field label="Maximum frequency" value="20000" className="w-10 text-center" />
      <span>Hz</span>
    </div>
  </div>
);

const DB_LABELS = ["100", "95", "90", "85", "80", "75", "70"];

const App: React.FC = () => (
  <div className="flex h-screen bg-[#f0f0f0] font-['Liberation_Sans',Arial,sans-serif] text-[11px] leading-[14px] text-black">
    <LeftSide />
    <main className="flex min-w-0 flex-1 flex-col">
      <ChartBar />
      <div className="grid min-h-0 flex-1 grid-cols-2 grid-rows-3 gap-[6px] pr-[3px] pb-[15px]">
        <Chart
          title="SPL"
          leftUnit="dB"
          rightUnit="deg"
          leftLabels={DB_LABELS}
          rightLabels={["180", "120", "60", "0", "-60", "-120", "-180"]}
          rows={30}
          view="78 64 1409 846"
          traces={SPL_TRACES}
          target={{ row: 15, from: 710, to: 15400 }}
        />
        <Chart
          title="GD & Phase"
          leftUnit="ms"
          rightUnit="deg"
          leftLabels={["15", "10", "5", "0", "-5"]}
          rightLabels={["180", "90", "0", "-90", "-180"]}
          rows={20}
          view="90 154 1402 846"
          traces={GD_TRACES}
          target={{ row: 10, from: 710, to: 15400 }}
        />
        <Chart
          title="Power & DI"
          leftUnit="dB"
          rightUnit="dB"
          leftLabels={DB_LABELS}
          rightLabels={["25", "20", "15", "10", "5", "0", "-5"]}
          rows={30}
          view="78 76 1409 846"
          traces={POWER_TRACES}
          target={{ row: 15, from: 20, to: 20000 }}
        />
        <Chart
          title="Filter"
          leftUnit="dB"
          rightUnit="deg"
          leftLabels={["10", "5", "0", "-5", "-10", "-15", "-20", "-25", "-30", "-35", "-40"]}
          rightLabels={["180", "144", "108", "72", "36", "0", "-36", "-72", "-108", "-144", "-180"]}
          rows={50}
          view="90 76 1402 846"
          traces={FILTER_TRACES}
        />
        <Chart
          title="Directivity (hor)"
          leftUnit="dB"
          leftLabels={DB_LABELS}
          rows={30}
          view="78 73 1409 849"
          traces={DIRECTIVITY_TRACES}
        />
        <Chart
          title="Impedance"
          leftUnit="ohm"
          rightUnit="deg"
          leftLabels={["40", "35", "30", "25", "20", "15", "10", "5", "0"]}
          rightLabels={["180", "135", "90", "45", "0", "-45", "-90", "-135", "-180"]}
          rows={40}
          view="90 73 1402 849"
          traces={IMPEDANCE_TRACES}
        />
      </div>
    </main>
  </div>
);

export default App;
